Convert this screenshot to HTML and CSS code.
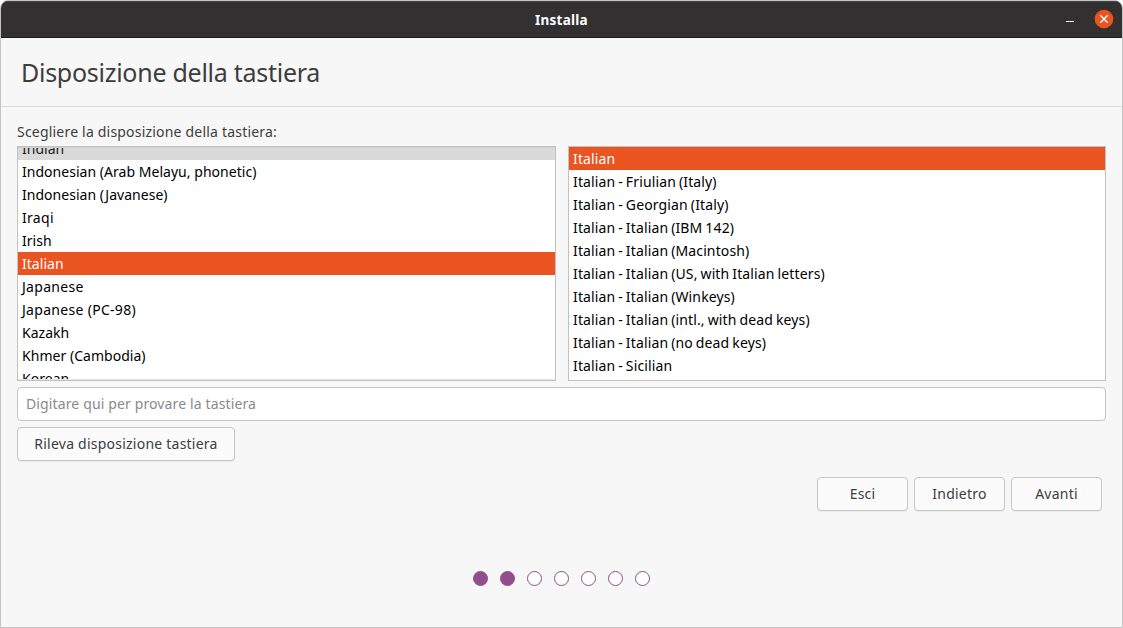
FILE: index.html
```html
<!DOCTYPE html>
<html lang="it">
<head>
<meta charset="utf-8">
<title>Installa</title>
<link rel="stylesheet" href="styles.css">
</head>
<body>
<div class="window">
  <header class="titlebar">
    <span class="title">Installa</span>
    <div class="controls">
      <svg class="minimize" width="8" height="18" viewBox="0 0 8 18"><path d="M0 11.5h8" stroke="#fff"/></svg>
      <svg class="close" width="20" height="20" viewBox="0 0 20 20"><circle cx="10" cy="10" r="9.3" fill="#e95420"/><path d="M6.3 6.3l7.4 7.4M13.7 6.3l-7.4 7.4" stroke="#fff" stroke-width="1.4"/></svg>
    </div>
  </header>
  <div class="heading"><h1>Disposizione della tastiera</h1></div>
  <main class="content">
    <label class="prompt">Scegliere la disposizione della tastiera:</label>
    <div class="lists">
      <ul class="list list-scrolled">
        <li class="hover">Indian</li>
        <li>Indonesian (Arab Melayu, phonetic)</li>
        <li>Indonesian (Javanese)</li>
        <li class="wide">Iraqi</li>
        <li>Irish</li>
        <li class="selected">Italian</li>
        <li class="wide">Japanese</li>
        <li class="wide">Japanese (PC-98)</li>
        <li>Kazakh</li>
        <li>Khmer (Cambodia)</li>
        <li>Korean</li>
      </ul>
      <ul class="list variants">
        <li class="selected">Italian</li>
        <li>Italian - Friulian (Italy)</li>
        <li>Italian - Georgian (Italy)</li>
        <li>Italian - Italian (IBM 142)</li>
        <li>Italian - Italian (Macintosh)</li>
        <li>Italian - Italian (US, with Italian letters)</li>
        <li>Italian - Italian (Winkeys)</li>
        <li>Italian - Italian (intl., with dead keys)</li>
        <li>Italian - Italian (no dead keys)</li>
        <li>Italian - Sicilian</li>
      </ul>
    </div>
    <input class="entry" type="text" placeholder="Digitare qui per provare la tastiera">
    <button class="button detect">Rileva disposizione tastiera</button>
    <div class="actions">
      <button class="button">Esci</button>
      <button class="button">Indietro</button>
      <button class="button">Avanti</button>
    </div>
    <div class="steps">
      <i class="dot done"></i><i class="dot done"></i><i class="dot"></i><i class="dot"></i><i class="dot"></i><i class="dot"></i><i class="dot"></i>
    </div>
  </main>
</div>
</body>
</html>
```

FILE: styles.css
```css
* { box-sizing: border-box; }
body {
  margin: 0;
  background: #fff;
  font: 14px/23px "Noto Sans", "Open Sans", sans-serif;
  color: #3d3d3d;
}
.window {
  width: 1123px;
  height: 628px;
  border: 1px solid #c4c4c4;
  border-radius: 8px 8px 0 0;
  background: #f7f7f7;
  overflow: hidden;
}
.titlebar {
  display: grid;
  grid-template-columns: 1fr auto 1fr;
  align-items: center;
  height: 37px;
  background: #323030;
  border-bottom: 1px solid #1f1e1e;
  box-shadow: inset 0 1px #454343;
}
.title {
  grid-column: 2;
  padding-top: 2px;
  color: #fff;
  font-size: 13.5px;
  font-weight: 700;
  letter-spacing: .25px;
}
.controls {
  display: flex;
  justify-content: flex-end;
  align-items: center;
  gap: 20px;
  padding-right: 8px;
}
.heading {
  height: 69px;
  padding: 17px 20px 0;
  border-bottom: 1px solid #dadada;
}
h1 {
  margin: 0;
  font-size: 25px;
  line-height: 34px;
  font-weight: 400;
  letter-spacing: -.27px;
}
.content {
  display: flex;
  flex-direction: column;
  padding: 13px 16px 0;
}
.prompt { height: 26px; line-height: 24px; letter-spacing: .2px; }
.lists {
  display: grid;
  grid-template-columns: 539px 538px;
  gap: 12px;
  height: 235px;
}
.list {
  margin: 0;
  padding: 0;
  list-style: none;
  border: 1px solid #c2c2c2;
  background: #fff;
  color: #000;
  overflow: hidden;
}
.list li { height: 23px; padding-left: 4px; white-space: nowrap; letter-spacing: .03px; }
.list .wide { letter-spacing: .3px; }
.variants li { letter-spacing: .13px; word-spacing: -.8px; }
.list-scrolled { position: relative; }
.list-scrolled::after {
  content: "";
  position: absolute;
  inset: 0;
  box-shadow: inset 0 1px #cfcfcf, inset 0 -1px #e4e4e4;
}
.list-scrolled li:first-child { margin-top: -10px; }
.list .hover { background: #dadada; color: #222; }
.list .selected { background: #e95420; color: #fff; }
.entry {
  height: 34px;
  margin-top: 6px;
  padding: 0 8px 2px;
  border: 1px solid #c4c4c4;
  border-radius: 4px;
  background: #fff;
  font: inherit;
  letter-spacing: .13px;
}
.entry::placeholder { color: #8a8a8a; }
.button {
  width: 91px;
  height: 34px;
  padding: 0 0 2px;
  border: 1px solid #c6c6c6;
  border-radius: 4px;
  background: #fbfbfb;
  box-shadow: 0 1px 1px rgba(0, 0, 0, .06);
  color: #3d3d3d;
  font: inherit;
  letter-spacing: .23px;
}
.detect { width: 218px; margin-top: 6px; }
.actions {
  display: flex;
  justify-content: flex-end;
  gap: 6px;
  margin-top: 16px;
  padding-right: 4px;
}
.steps {
  display: flex;
  justify-content: center;
  gap: 12px;
  margin-top: 60px;
}
.dot {
  width: 15px;
  height: 15px;
  border: 1px solid #924d8b;
  border-radius: 50%;
  background: #fff;
}
.done { background: #924d8b; }
```
